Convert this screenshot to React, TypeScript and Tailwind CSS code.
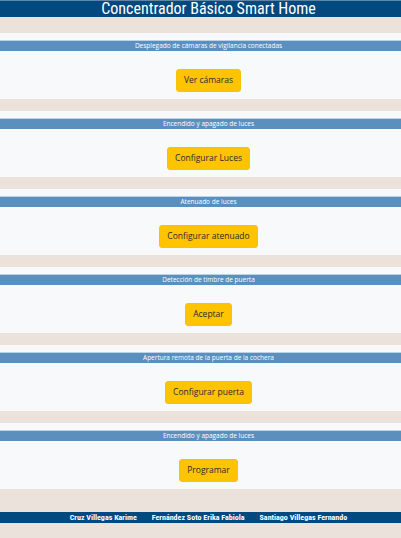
const sections = [
  { id: "camaras", title: "Desplegado de cámaras de vigilancia conectadas", action: "Ver cámaras" },
  { id: "luces", title: "Encendido y apagado de luces", action: "Configurar Luces" },
  { id: "atenuado", title: "Atenuado de luces", action: "Configurar atenuado" },
  { id: "timbre", title: "Detección de timbre de puerta", action: "Aceptar" },
  { id: "cochera", title: "Apertura remota de la puerta de la cochera", action: "Configurar puerta" },
  { id: "programar", title: "Encendido y apagado de luces", action: "Programar" },
];

const authors = ["Cruz Villegas Karime", "Fernández Soto Erika Fabiola", "Santiago Villegas Fernando"];

const narrow = "font-['Liberation_Sans_Narrow','Roboto_Condensed',Roboto,sans-serif]";

const Section = ({ title, action }: { title: string; action: string }) => (
  <div>
    <div className="h-[7px] bg-[#f8f9fa]" />
    <div className="flex h-[11px] items-center justify-center border-t border-[#bcd2e6] bg-[#5b8fbe] pl-[16px] font-['Open_Sans',sans-serif] text-[6.5px] leading-none text-white">
      {title}
    </div>
    <div className="flex h-[48px] justify-center bg-[#f7f9fb] pl-[16px] pt-[18px]">
      <button className="h-[23px] rounded-[3px] border border-[#f5c20d] bg-[#ffc400] px-[7px] font-['Open_Sans',sans-serif] text-[8.5px] text-[#2a2a2a]">
        {action}
      </button>
    </div>
  </div>
);

const App = () => {
  return (
    <div className="min-h-[538px] bg-[#ebe2dc]">
      <header className={`flex h-[17px] items-center justify-center border-t border-[#5d86a8] bg-[#01497f] pl-[16px] text-[16px] leading-none text-white ${narrow}`}>
        Concentrador Básico Smart Home
      </header>
      <div className="h-[16px]" />
      {sections.map((s, index) => (
        <div key={s.id}>
          <Section title={s.title} action={s.action} />
          <div className={index == sections.length - 1 ? "h-[23px]" : "h-[12px]"} />
        </div>
      ))}
      <footer className={`flex h-[11px] items-center justify-center gap-[15px] bg-[#01497f] pl-[16px] text-[8px] font-bold leading-none text-white ${narrow}`}>
        {authors.map((a) => (
          <span key={a}>{a}</span>
        ))}
      </footer>
    </div>
  );
};

export default App;
